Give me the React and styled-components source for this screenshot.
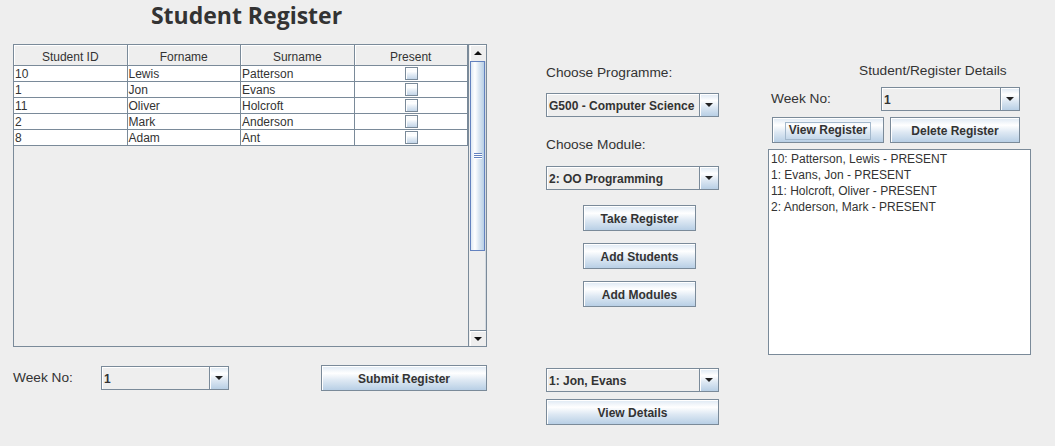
import React from 'react';
import styled, { createGlobalStyle } from 'styled-components';

const BORDER = '#7a8a99';
const OCEAN = 'linear-gradient(180deg, #dde8f3 0%, #ffffff 30%, #dde8f3 60%, #b8cfe5 100%)';
const OCEAN_H = 'linear-gradient(90deg, #dde8f3 0%, #ffffff 30%, #dde8f3 60%, #b8cfe5 100%)';

const GlobalStyle = createGlobalStyle`
  html, body { margin: 0; padding: 0; background: #eeeeee; }
  body { font-family: "Liberation Sans", Arial, sans-serif; color: #333333; }
  * { box-sizing: border-box; }
`;

const Page = styled.div`
  display: flex;
  width: 1055px;
  height: 446px;
  padding-left: 13px;
  background: #eeeeee;
  overflow: hidden;
`;

const LeftColumn = styled.div`
  display: flex;
  flex-direction: column;
  width: 474px;
  flex: none;
`;

const Title = styled.h1`
  margin: 0 0 14px;
  padding-right: 7px;
  height: 30px;
  line-height: 30px;
  font-family: "Open Sans", "Liberation Sans", sans-serif;
  font-weight: 700;
  font-size: 23px;
  text-align: center;
  color: #333333;
`;

const ScrollPane = styled.div`
  display: flex;
  height: 303px;
  border: 1px solid ${BORDER};
`;

const Viewport = styled.div`
  width: 455px;
  flex: none;
  border-right: 1px solid ${BORDER};
  background: #eeeeee;
`;

const Grid = styled.div`
  display: grid;
  grid-template-columns: repeat(4, 1fr);
  width: 454px;
`;

const HeaderCell = styled.div`
  height: 21px;
  padding-top: 4px;
  line-height: 16px;
  font-size: 12px;
  text-align: center;
  color: #333333;
  background: #eeeeee;
  border-right: 1px solid ${BORDER};
  border-bottom: 1px solid ${BORDER};
  box-shadow: inset 1px 1px 0 #ffffff;
  overflow: hidden;
  white-space: nowrap;
`;

const Cell = styled.div`
  height: 16px;
  font-size: 12px;
  padding-left: 1px;
  color: #333333;
  background: #ffffff;
  border-right: 1px solid ${BORDER};
  border-bottom: 1px solid ${BORDER};
  white-space: nowrap;
  overflow: hidden;
  display: flex;
  align-items: ${(p) => (p.$center ? 'center' : 'flex-start')};
  justify-content: ${(p) => (p.$center ? 'center' : 'flex-start')};
`;

const CellText = styled.span`
  line-height: 15px;
  margin-top: 1px;
`;

const CheckBox = styled.span`
  width: 13px;
  height: 13px;
  border: 1px solid ${BORDER};
  background: linear-gradient(180deg, #f5f8fb 0%, #ffffff 30%, #e3ecf5 60%, #c3d5e8 100%);
  box-shadow: inset 1px 1px 0 #ffffff;
`;

const ScrollBar = styled.div`
  width: 17px;
  flex: none;
  display: flex;
  flex-direction: column;
  padding-left: 1px;
  background: #eeeeee;
`;

const ScrollArrowButton = styled.div`
  height: 16px;
  flex: none;
  display: flex;
  align-items: center;
  justify-content: center;
  background: #eeeeee;
  box-shadow: inset 1px 1px 0 #ffffff;
  border-top: ${(p) => (p.$down ? `1px solid ${BORDER}` : 'none')};
`;

const UpTriangle = styled.span`
  width: 0;
  height: 0;
  border-left: 4px solid transparent;
  border-right: 4px solid transparent;
  border-bottom: 4px solid #111111;
`;

const DownTriangle = styled.span`
  width: 0;
  height: 0;
  border-left: 4px solid transparent;
  border-right: 4px solid transparent;
  border-top: 4px solid ${(p) => p.$color || '#111111'};
`;

const Track = styled.div`
  flex: 1;
  display: flex;
  flex-direction: column;
  border-right: 1px solid #d4dae0;
`;

const Thumb = styled.div`
  height: 190px;
  flex: none;
  border: 1px solid #6382bf;
  background: ${OCEAN_H};
  display: flex;
  align-items: center;
  justify-content: center;
`;

const Grip = styled.span`
  width: 8px;
  height: 6px;
  margin-left: 1px;
  background: repeating-linear-gradient(180deg, #6382bf 0px, #6382bf 1px, #ffffff 1px, #ffffff 2px);
`;

const BottomRow = styled.div`
  display: flex;
  align-items: center;
  height: 26px;
  margin-top: 18px;
`;

const Label = styled.div`
  font-size: 13.7px;
  line-height: 16px;
  color: #333333;
  white-space: nowrap;
  width: ${(p) => (p.$w ? `${p.$w}px` : 'auto')};
  padding-left: ${(p) => p.$indent || 0}px;
  margin-top: ${(p) => p.$top || 0}px;
  flex: none;
`;

const Combo = styled.div`
  display: flex;
  width: ${(p) => p.$w}px;
  height: 24px;
  flex: none;
  border: 1px solid ${BORDER};
  background: #eeeeee;
  margin-top: ${(p) => p.$top || 0}px;
`;

const ComboValue = styled.div`
  flex: 1;
  display: flex;
  align-items: center;
  padding-left: 1px;
  border-top: 1px solid #ffffff;
  border-left: 1px solid #ffffff;
  font-size: 12px;
  font-weight: 700;
  color: #333333;
  white-space: nowrap;
  overflow: hidden;
`;

const ComboArrow = styled.div`
  width: 19px;
  flex: none;
  border-left: 1px solid ${BORDER};
  background: ${OCEAN};
  box-shadow: inset 1px 1px 0 #ffffff;
  display: flex;
  align-items: center;
  justify-content: center;
`;

const Button = styled.button`
  width: ${(p) => (p.$w ? `${p.$w}px` : '100%')};
  height: 26px;
  flex: none;
  margin: ${(p) => p.$top || 0}px 0 0 ${(p) => p.$left || 0}px;
  padding: 1px 0 0;
  border: 1px solid ${BORDER};
  background: ${OCEAN};
  box-shadow: inset 1px 1px 0 #ffffff;
  font-family: "Liberation Sans", Arial, sans-serif;
  font-size: 12px;
  font-weight: 700;
  color: #333333;
  display: flex;
  align-items: center;
  justify-content: center;
  cursor: default;
`;

const FocusRing = styled.span`
  padding: 1px 3px 2px;
  border: 1px solid #a3b8cc;
  line-height: 13px;
`;

const MiddleColumn = styled.div`
  display: flex;
  flex-direction: column;
  width: 173px;
  flex: none;
  margin-left: 59px;
`;

const RightColumn = styled.div`
  display: flex;
  flex-direction: column;
  width: 263px;
  flex: none;
  margin-left: 49px;
`;

const Row = styled.div`
  display: flex;
  align-items: center;
  gap: ${(p) => p.$gap || 0}px;
  height: ${(p) => p.$h}px;
  margin-top: ${(p) => p.$top || 0}px;
  padding-left: ${(p) => p.$indent || 0}px;
`;

const List = styled.div`
  height: 206px;
  margin-top: 6px;
  border: 1px solid ${BORDER};
  background: #ffffff;
  padding: 1px 0 0 2px;
`;

const ListItem = styled.div`
  height: 16px;
  line-height: 16px;
  font-size: 12px;
  color: #333333;
  white-space: nowrap;
`;

const Spacer = styled.div`
  flex: 1;
`;

const students = [
  ['10', 'Lewis', 'Patterson'],
  ['1', 'Jon', 'Evans'],
  ['11', 'Oliver', 'Holcroft'],
  ['2', 'Mark', 'Anderson'],
  ['8', 'Adam', 'Ant'],
];

const registerLines = [
  '10: Patterson, Lewis - PRESENT',
  '1: Evans, Jon - PRESENT',
  '11: Holcroft, Oliver - PRESENT',
  '2: Anderson, Mark - PRESENT',
];

function ComboBox({ value, w, top }) {
  return (
    <Combo $w={w} $top={top}>
      <ComboValue>{value}</ComboValue>
      <ComboArrow>
        <DownTriangle $color="#222222" />
      </ComboArrow>
    </Combo>
  );
}

export default function App() {
  return (
    <>
      <GlobalStyle />
      <Page>
        <LeftColumn>
          <Title>Student Register</Title>
          <ScrollPane>
            <Viewport>
              <Grid>
                {['Student ID', 'Forname', 'Surname', 'Present'].map((h) => (
                  <HeaderCell key={h}>{h}</HeaderCell>
                ))}
                {students.map(([id, first, last]) => (
                  <React.Fragment key={id}>
                    <Cell><CellText>{id}</CellText></Cell>
                    <Cell><CellText>{first}</CellText></Cell>
                    <Cell><CellText>{last}</CellText></Cell>
                    <Cell $center><CheckBox /></Cell>
                  </React.Fragment>
                ))}
              </Grid>
            </Viewport>
            <ScrollBar>
              <ScrollArrowButton>
                <UpTriangle />
              </ScrollArrowButton>
              <Track>
                <Thumb>
                  <Grip />
                </Thumb>
              </Track>
              <ScrollArrowButton $down>
                <DownTriangle />
              </ScrollArrowButton>
            </ScrollBar>
          </ScrollPane>
          <BottomRow>
            <Label $w={88}>Week No:</Label>
            <ComboBox value="1" w={128} />
            <Spacer />
            <Button $w={166}>Submit Register</Button>
          </BottomRow>
        </LeftColumn>

        <MiddleColumn>
          <Label $top={65}>Choose Programme:</Label>
          <ComboBox value="G500 - Computer Science" w={173} top={12} />
          <Label $top={20}>Choose Module:</Label>
          <ComboBox value="2: OO Programming" w={173} top={13} />
          <Button $w={113} $left={37} $top={15}>Take Register</Button>
          <Button $w={113} $left={37} $top={12}>Add Students</Button>
          <Button $w={113} $left={37} $top={12}>Add Modules</Button>
          <ComboBox value="1: Jon, Evans" w={173} top={61} />
          <Button $top={7}>View Details</Button>
        </MiddleColumn>

        <RightColumn>
          <Label $top={63} $indent={91}>Student/Register Details</Label>
          <Row $h={24} $top={8} $indent={3}>
            <Label $w={110}>Week No:</Label>
            <ComboBox value="1" w={139} />
          </Row>
          <Row $h={26} $top={6} $indent={4} $gap={6}>
            <Button $w={112}>
              <FocusRing>View Register</FocusRing>
            </Button>
            <Button $w={130}>Delete Register</Button>
          </Row>
          <List>
            {registerLines.map((line) => (
              <ListItem key={line}>{line}</ListItem>
            ))}
          </List>
        </RightColumn>
      </Page>
    </>
  );
}
